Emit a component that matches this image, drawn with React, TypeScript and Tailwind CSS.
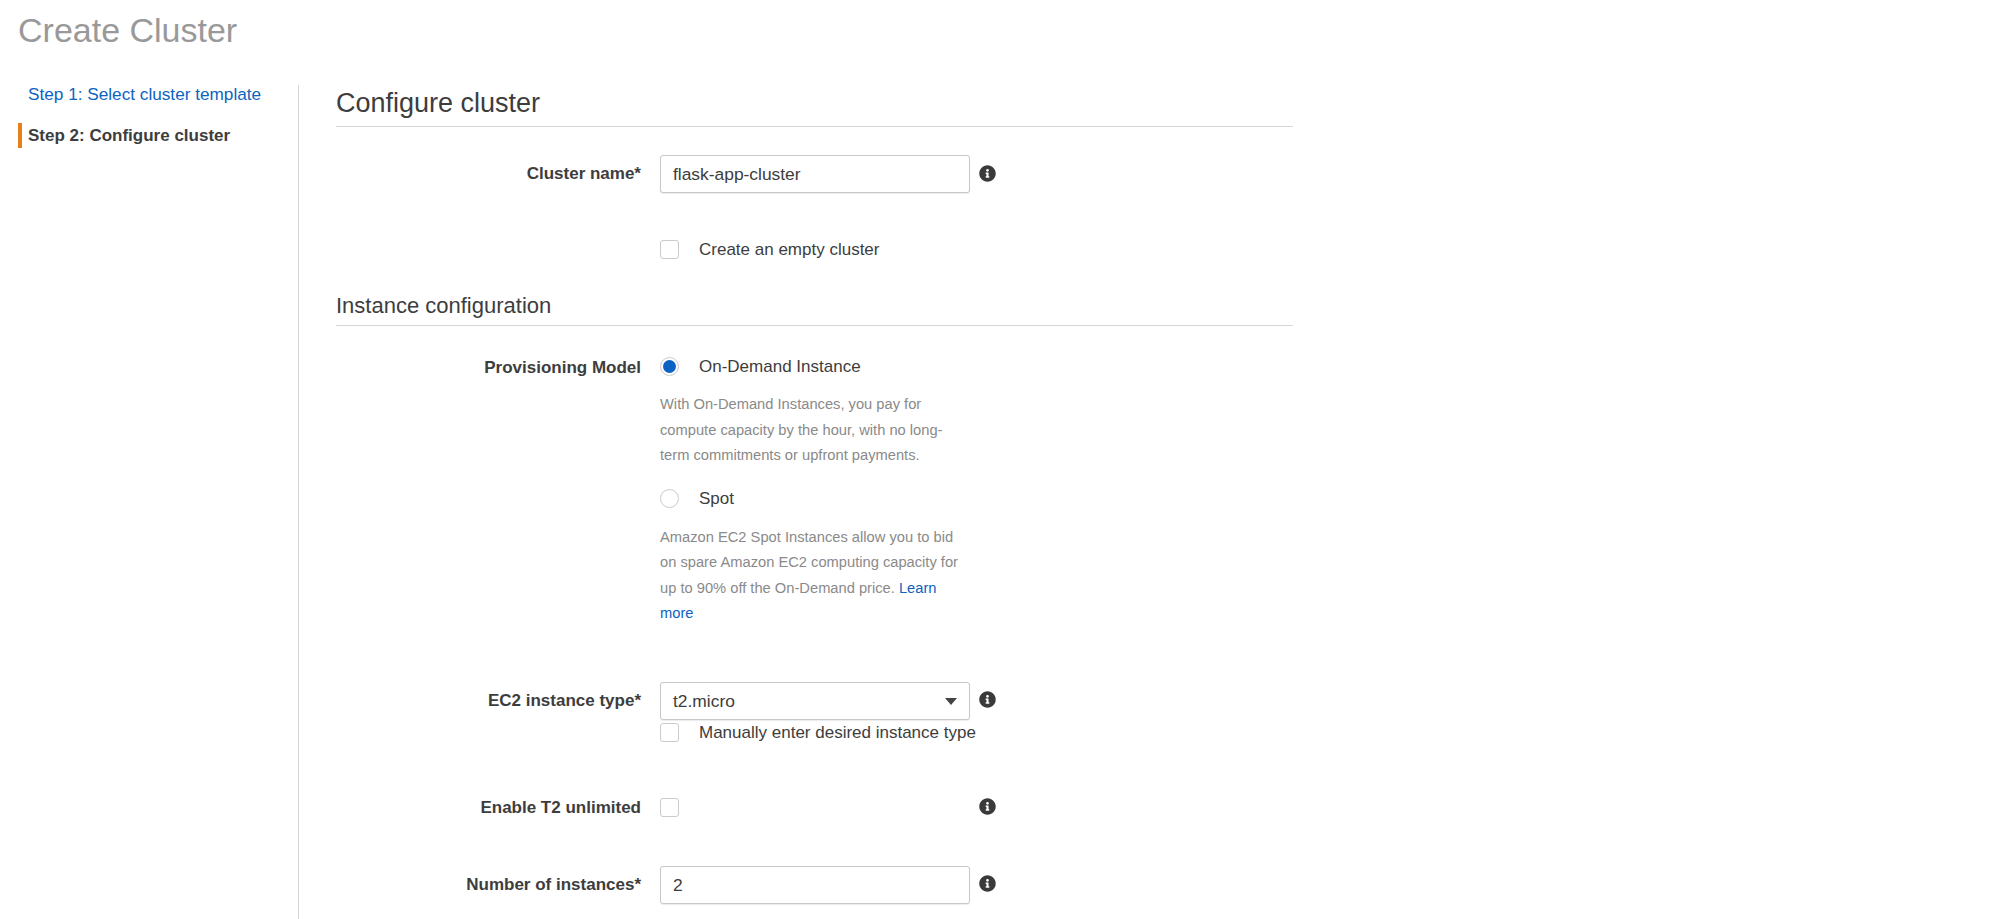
import { FaInfoCircle } from 'react-icons/fa'

const Info = () => <FaInfoCircle className="mb-[2px] text-[17px] text-[#3a3a3a]" />

const Checkbox = () => (
  <div className="h-[19px] w-[19px] shrink-0 rounded-[3px] border border-[#c8cccc] bg-white" />
)

const Radio = ({ checked }: { checked?: boolean }) => (
  <div className="flex h-[19px] w-[19px] shrink-0 items-center justify-center rounded-full border border-[#c8cccc] bg-white">
    {checked && <div className="h-[13px] w-[13px] rounded-full bg-[#0a63c5]" />}
  </div>
)

const Field = ({ children }: { children: React.ReactNode }) => (
  <div className="flex h-[38px] w-[310px] items-center rounded-[3px] border border-[#c4c8c8] bg-white pl-[12px] pr-[12px] pt-[1px] text-[17.4px] text-[#3d3d3d] shadow-[0_1px_1px_rgba(0,0,0,0.08)]">
    {children}
  </div>
)

const Label = ({ children }: { children: React.ReactNode }) => (
  <div className="w-[305px] shrink-0 text-right text-[17px] font-bold leading-[38px] text-[#3d3d3d]">{children}</div>
)

const Help = ({ children }: { children: React.ReactNode }) => (
  <p className="w-[300px] text-[14.7px] leading-[25.5px] text-[#8a8a8a]">{children}</p>
)

export default function App() {
  return (
    <div className="h-screen overflow-hidden bg-white font-['Liberation_Sans',Arial,sans-serif]">
      <h1 className="pl-[18px] pt-[11px] text-[34px] leading-[38px] text-[#999999]">Create Cluster</h1>

      <div className="mt-[36px] flex h-full">
        {/* Steps */}
        <div className="w-[299px] shrink-0 border-r border-[#d5d5d5] pl-[18px]">
          <a className="block pl-[10px] text-[17.2px] leading-[18px] text-[#0d63c0]">Step 1: Select cluster template</a>
          <div className="mt-[20px] border-l-4 border-[#e8801a] pl-[6px] text-[17px] font-bold leading-[25px] text-[#3d3d3d]">
            Step 2: Configure cluster
          </div>
        </div>

        {/* Form */}
        <div className="ml-[37px] w-[957px]">
          <h2 className="mt-[2px] border-b border-[#d5d5d5] pb-[7px] text-[27px] leading-[32px] text-[#3d3d3d]">Configure cluster</h2>

          <div className="mt-[28px] flex items-center">
            <Label>Cluster name*</Label>
            <div className="ml-[19px]"><Field>flask-app-cluster</Field></div>
            <div className="ml-[9px]"><Info /></div>
          </div>

          <div className="ml-[324px] mt-[47px] flex items-center gap-[20px] text-[17px] leading-[19px] text-[#3d3d3d]">
            <Checkbox />
            <span>Create an empty cluster</span>
          </div>

          <h3 className="mt-[35px] border-b border-[#d5d5d5] pb-[7px] text-[22px] leading-[24px] text-[#3d3d3d]">Instance configuration</h3>

          <div className="mt-[31px] flex">
            <div className="-mt-[8px]"><Label>Provisioning Model</Label></div>
            <div className="ml-[19px]">
              <div className="flex items-center gap-[20px] text-[17px] leading-[19px] text-[#3d3d3d]">
                <Radio checked />
                <span>On-Demand Instance</span>
              </div>
              <div className="mt-[16px]">
                <Help>With On-Demand Instances, you pay for compute capacity by the hour, with no long-term commitments or upfront payments.</Help>
              </div>
              <div className="mt-[20px] flex items-center gap-[20px] text-[17px] leading-[19px] text-[#3d3d3d]">
                <Radio />
                <span>Spot</span>
              </div>
              <div className="mt-[17px]">
                <Help>
                  Amazon EC2 Spot Instances allow you to bid on spare Amazon EC2 computing capacity for up to 90% off the On-Demand price. <a className="text-[#0d63c0]">Learn</a> <a className="text-[#0d63c0]">more</a>
                </Help>
              </div>
            </div>
          </div>

          <div className="mt-[55px] flex items-center">
            <Label>EC2 instance type*</Label>
            <div className="ml-[19px]">
              <Field>
                <span className="flex-1">t2.micro</span>
                <svg width="12" height="7" viewBox="0 0 12 7"><polygon points="0,0 12,0 6,7" fill="#444444" /></svg>
              </Field>
            </div>
            <div className="ml-[9px]"><Info /></div>
          </div>
          <div className="ml-[324px] mt-[3px] flex items-center gap-[20px] text-[17px] leading-[19px] text-[#3d3d3d]">
            <Checkbox />
            <span className="whitespace-nowrap">Manually enter desired instance type</span>
          </div>

          <div className="mt-[47px] flex items-center">
            <Label>Enable T2 unlimited</Label>
            <div className="ml-[19px] w-[310px]"><Checkbox /></div>
            <div className="ml-[9px]"><Info /></div>
          </div>

          <div className="mt-[39px] flex items-center">
            <Label>Number of instances*</Label>
            <div className="ml-[19px]"><Field>2</Field></div>
            <div className="ml-[9px]"><Info /></div>
          </div>
        </div>
      </div>
    </div>
  )
}
